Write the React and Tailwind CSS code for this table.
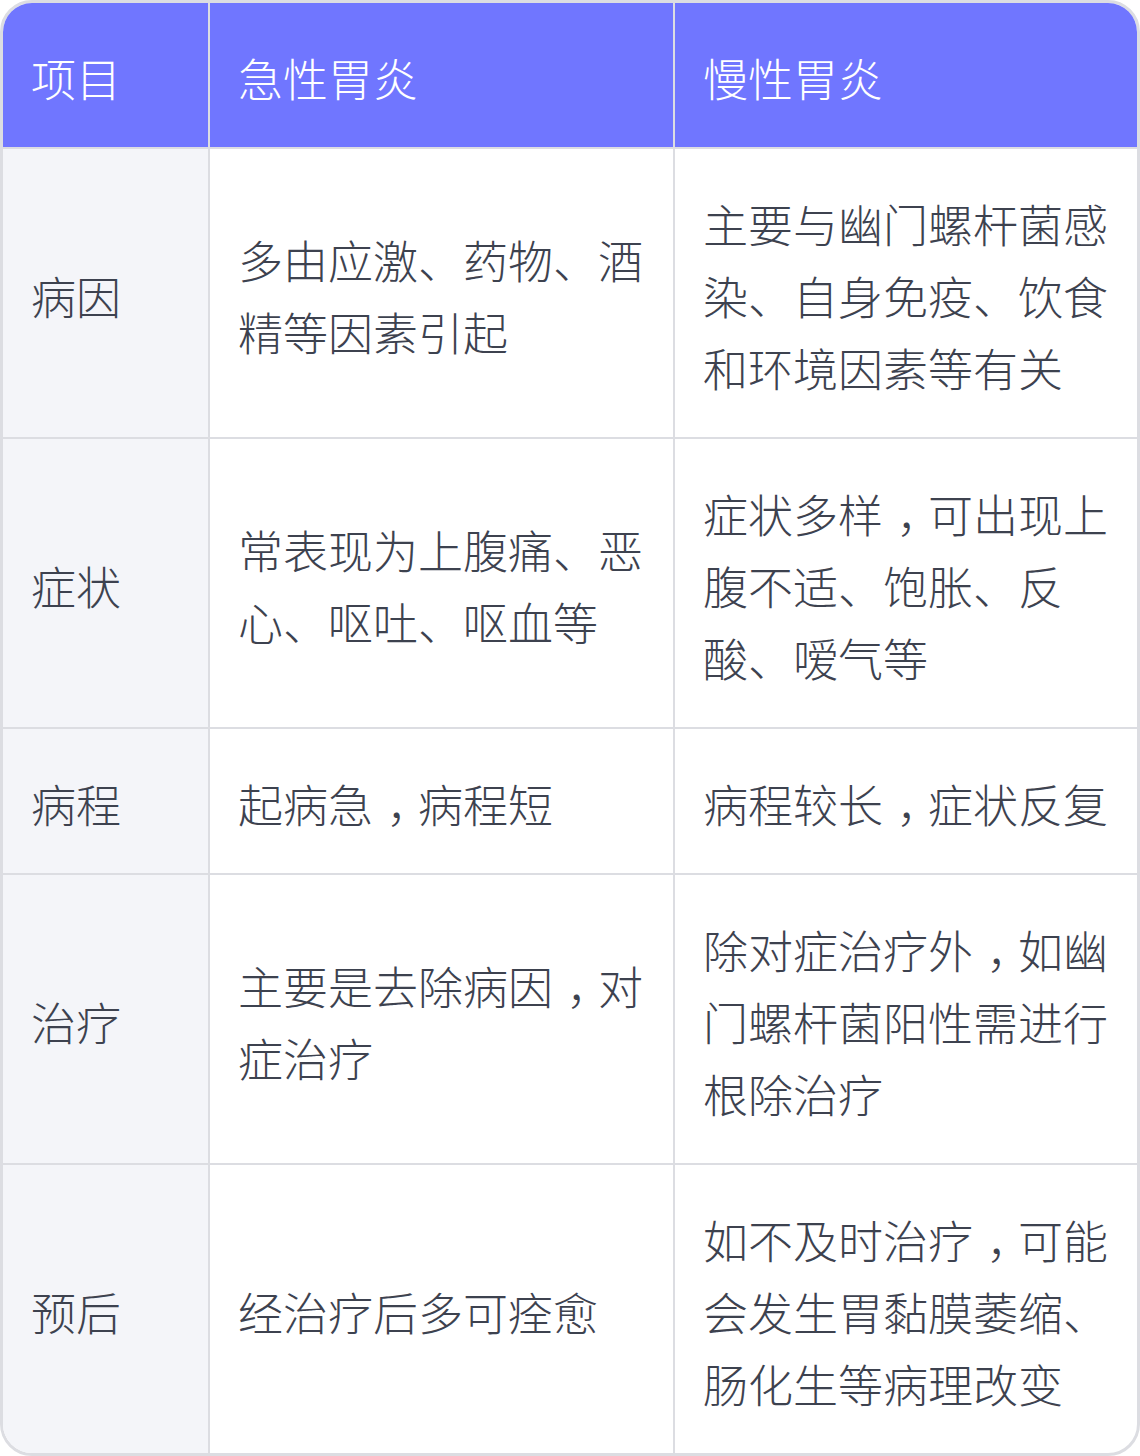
import { Fragment } from "react";

const rows = [
  {
    item: "病因",
    acute: "多由应激、药物、酒精等因素引起",
    chronic: "主要与幽门螺杆菌感染、自身免疫、饮食和环境因素等有关",
  },
  {
    item: "症状",
    acute: "常表现为上腹痛、恶心、呕吐、呕血等",
    chronic: "症状多样，可出现上腹不适、饱胀、反酸、嗳气等",
  },
  {
    item: "病程",
    acute: "起病急，病程短",
    chronic: "病程较长，症状反复",
  },
  {
    item: "治疗",
    acute: "主要是去除病因，对症治疗",
    chronic: "除对症治疗外，如幽门螺杆菌阳性需进行根除治疗",
  },
  {
    item: "预后",
    acute: "经治疗后多可痊愈",
    chronic: "如不及时治疗，可能会发生胃黏膜萎缩、肠化生等病理改变",
  },
];

const cell = "flex items-center px-[28px] pt-[39px] pb-[33px]";

// full-width commas sit low and centred in their box in the reference
const Text = ({ children }) => {
  const parts = children.split("，");
  return (
    <p>
      {parts.map((p, i) => (
        <Fragment key={i}>
          {p}
          {i < parts.length - 1 && (
            <span className="inline-block w-[1em] pl-[0.3em] tracking-[-0.3em]">，</span>
          )}
        </Fragment>
      ))}
    </p>
  );
};

export default function App() {
  return (
    <div
      className="w-[1140px] min-h-[1456px] bg-white"
      style={{ fontFamily: '"Noto Sans CJK SC", "Noto Sans", sans-serif' }}
    >
      <div className="overflow-hidden rounded-[32px] border-[3px] border-[#dcdde2] text-[45px] font-light leading-[72px] text-[#3d424f]">
        {/* header */}
        <div className="grid grid-cols-[205px_465px_1fr] border-b-2 border-[#dcdde2] bg-[#7076ff] text-white">
          <div className={cell}>项目</div>
          <div className={`${cell} border-l-2 border-[#dcdde2]`}>急性胃炎</div>
          <div className={`${cell} border-l-2 border-[#dcdde2]`}>慢性胃炎</div>
        </div>

        {rows.map((r, i) => (
          <div
            key={r.item}
            className={`grid grid-cols-[205px_465px_1fr] ${
              i < rows.length - 1 ? "border-b-2 border-[#dcdde2]" : ""
            }`}
          >
            <div className={`${cell} bg-[#f4f5f9]`}>{r.item}</div>
            <div className={`${cell} border-l-2 border-[#dcdde2]`}>
              <Text>{r.acute}</Text>
            </div>
            <div className={`${cell} border-l-2 border-[#dcdde2]`}>
              <Text>{r.chronic}</Text>
            </div>
          </div>
        ))}
      </div>
    </div>
  );
}
